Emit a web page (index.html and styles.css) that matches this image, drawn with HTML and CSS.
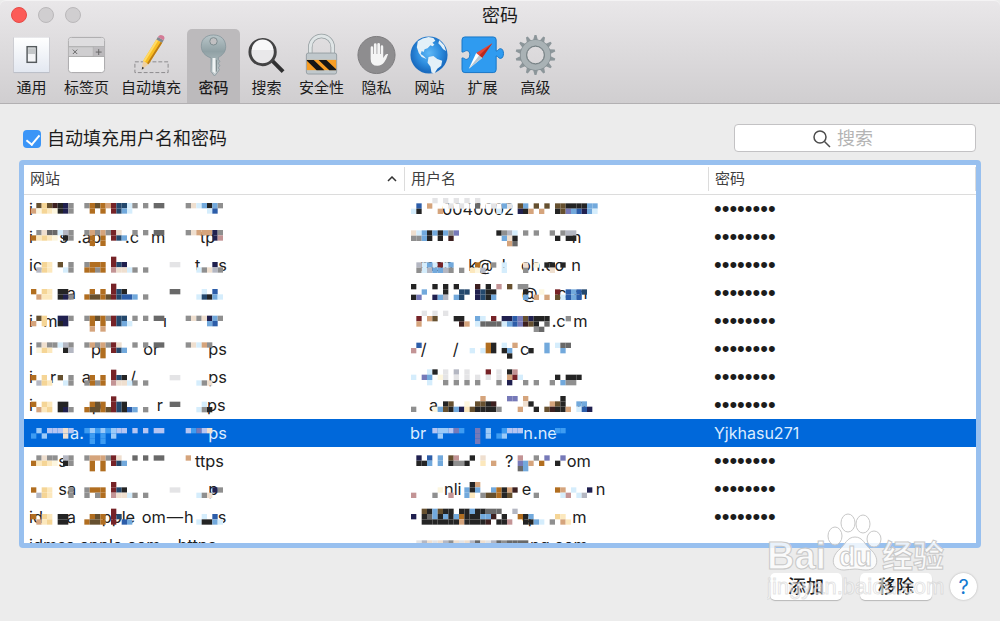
FILE: index.html
```html
<!DOCTYPE html>
<html lang="zh-CN">
<head>
  <meta charset="UTF-8" />
  <meta name="viewport" content="width=device-width, initial-scale=1.0" />
  <title>密码</title>
  <link rel="stylesheet" href="styles.css">
</head>
<body>
  <header>
    <div class="titlebar">
      <div class="lights">
        <button class="light close" aria-label="关闭"></button>
        <button class="light" aria-label="最小化"></button>
        <button class="light" aria-label="缩放"></button>
      </div>
      <h1>密码</h1>
    </div>
    <nav class="toolbar">
      <button class="tool">
        <svg viewBox="0 0 42 42"><defs><linearGradient id="pale" x2="0" y2="1"><stop stop-color="#fff"/><stop offset="1" stop-color="#e3e8f1"/></linearGradient></defs>
          <rect x="2.500" y="3" width="37" height="36.500" fill="#b9bcc5"/><rect x="3" y="3" width="36" height="35.500" fill="url(#pale)"/>
          <rect x="16.500" y="12.500" width="9.500" height="16" fill="#f4f5f7" stroke="#555a5d" stroke-width="1.500"/><rect x="17.500" y="14" width="7.500" height="6" fill="#c4c7c9"/></svg>
        <span>通用</span>
      </button>
      <button class="tool">
        <svg viewBox="0 0 42 42"><rect x="2.500" y="3" width="37" height="36" rx="3" fill="#fff" stroke="#a9a8aa"/>
          <path d="M3 22V6q0-2.500 2.500-2.500h31q2.500 0 2.500 2.500v16z" fill="#dedddf"/><path d="M3 12.500h36v10H3z" fill="#cfced0"/><path d="M3 12.500h36M3 22.500h36M28 12.500v10" stroke="#aaa" fill="none"/>
          <path d="M28 13h11v9H28z" fill="#bbb9bc"/><path d="M7 15.500l4.500 4.500m0-4.500L7 20M30.500 18h6m-3-3v6" stroke="#666" fill="none"/></svg>
        <span>标签页</span>
      </button>
      <button class="tool">
        <svg viewBox="0 0 42 42"><rect x="4" y="28" width="34" height="11" fill="none" stroke="#8b8a8c" stroke-dasharray="4 2"/>
          <path d="M11 36l1.500-9 5.500 3.500z" fill="#efd0a0"/><path d="M11 36l.5-3 2 1.200z" fill="#333"/><path d="M12.500 27L26 5l6 3.500L18 30.500z" fill="#f8bd22"/><path d="M12.500 27L26 5l2 1.200-13.800 22z" fill="#ffda65"/><path d="M16.500 29.500L30.500 7.500 32 8.500 18 30.500z" fill="#bb7b16"/>
          <path d="M26 5l1.500-2.500 6 3.500L32 8.500z" fill="#818990"/><path d="M27.500 2.500Q29.500-.5 32.500 1t1 5z" fill="#d37b96"/></svg>
        <span>自动填充</span>
      </button>
      <button class="tool active">
        <svg viewBox="0 0 42 42"><defs><linearGradient id="steel" x2="0" y2="1"><stop stop-color="#b9c6c9"/><stop offset=".4" stop-color="#90a1a5"/><stop offset="1" stop-color="#c8d0d2"/></linearGradient></defs>
          <path d="M21 .5c8 0 12.500 5 12.500 12 0 6-4 9-7.500 11v2l1.500 2-1.500 2 1.500 2.500-1.500 2 1 2-2 3-3 3.500-3.500-4.500V24c-6-2-10-6-10-12C8.500 5 13 .5 21 .5z" fill="url(#steel)" stroke="#84949a" stroke-width=".8"/>
          <path d="M20 24h3v16l-3-2z" fill="#f0f4f4"/><path d="M24 26v12" stroke="#7b888b"/><circle cx="21" cy="7" r="3.800" fill="#c1c0c2" stroke="#7c8b8e"/></svg>
        <span>密码</span>
      </button>
      <button class="tool">
        <svg viewBox="0 0 42 42"><path d="M27 27l11 11" stroke="#303031" stroke-width="4"/><circle cx="17" cy="18" r="13" fill="#e9e8ea" stroke="#434344" stroke-width="3"/><path d="M6 16a11 11 0 0 1 22 0z" fill="#f8f8f9"/></svg>
        <span>搜索</span>
      </button>
      <button class="tool">
        <svg viewBox="0 0 42 42"><path d="M9.500 21V13a11.500 11.500 0 0 1 23 0v8" fill="none" stroke="#929b9e" stroke-width="4.500"/><path d="M9.500 21V13a11.500 11.500 0 0 1 23 0v8" fill="none" stroke="#dfe5e6" stroke-width="3"/>
          <rect x="5.500" y="19" width="31" height="21.500" rx="2" fill="#c0c8cc" stroke="#969fa3"/><path d="M6 26h30v10.500H6z" fill="#f79d24"/><path d="M6 26h7l11 10.500h-8L6 27zM18 26h8l10 9.500v1h-7z" fill="#161616"/></svg>
        <span>安全性</span>
      </button>
      <button class="tool">
        <svg viewBox="0 0 42 42"><circle cx="21" cy="21" r="19" fill="#8e8d8f" stroke="#7c7b7d"/>
          <path d="M15 25V13.500q0-1.500 1.300-1.500t1.300 1.500V20h.7V10.500q0-1.500 1.400-1.500t1.400 1.500V20h.7v-9.700q0-1.500 1.400-1.500t1.400 1.500V20h.7v-7.500q0-1.500 1.300-1.500t1.300 1.500V24l2-3q1-1.500 3-1-1.500 5-4 8.500T22 32q-7 0-7-7z" fill="#f4f4f4"/></svg>
        <span>隐私</span>
      </button>
      <button class="tool">
        <svg viewBox="0 0 42 42"><defs><radialGradient id="sea" cy=".45"><stop stop-color="#5fb8f6"/><stop offset=".6" stop-color="#2f8fe0"/><stop offset="1" stop-color="#1a6cc0"/></radialGradient></defs><circle cx="20.500" cy="21" r="19" fill="url(#sea)"/>
          <path d="M9 7l5-3 6-1.500 5 1 2 3-3 2 2 2-2 1.500-2-1-3 3-3 1-1 3-2-1-1 3 3 2 3 3-5-2-3-4-2-6zM31 6l5 5 2 6-3-2-3-4-2-2zM20 23l5-1 4 3 5 2-1 5-4 3-3 5-3-1-1-6-3-4z" fill="#e3f0f8"/></svg>
        <span>网站</span>
      </button>
      <button class="tool">
        <svg viewBox="0 0 42 42"><path d="M3 2.500h29q3 0 3 3V17c2 0 2-2.500 4.500-2.500 4 0 4 10 0 10-2.500 0-2.500-2.500-4.500-2.500v14q0 3-3 3H3q-3 0-3-3V24c3 0 3 2 5 1.500 4-1 4-9 0-9-2 0-2 1.500-5 1.500V5.500q0-3 3-3z" fill="#2f9bf0" stroke="#1775c6"/>
          <path d="M31 9L14.500 19l6 5z" fill="#e94635"/><path d="M31 9L20.500 24l-3-2.500z" fill="#b9281f"/><path d="M7 35l7.500-16 6 5z" fill="#fff"/><path d="M7 35l10.500-13.500 3 2.500z" fill="#b9c7d2"/></svg>
        <span>扩展</span>
      </button>
      <button class="tool">
        <svg viewBox="0 0 42 42" id="gear"><circle cx="21" cy="21" r="12.500" fill="none" stroke="#858f93" stroke-width="7"/><circle cx="21" cy="21" r="12.500" fill="none" stroke="#a9b2b5" stroke-width="5.500"/><circle cx="21" cy="21" r="9" fill="none" stroke="#737e82"/></svg>
        <span>高级</span>
      </button>
    </nav>
  </header>

  <main>
    <div class="options">
      <label class="autofill"><input type="checkbox" checked />自动填充用户名和密码</label>
      <div class="search">
        <svg viewBox="0 0 18 18"><circle cx="7" cy="7" r="6" fill="none" stroke="#4c4c4c" stroke-width="1.500"/><path d="M11.500 11.500l5.500 5.500" stroke="#4c4c4c" stroke-width="1.500"/></svg>
        <input type="search" placeholder="搜索" aria-label="搜索" />
      </div>
    </div>

    <div class="list">
      <table>
        <colgroup><col class="site"><col class="user"><col></colgroup>
        <thead>
          <tr>
            <th><span>网站<svg class="sort" viewBox="0 0 10 6"><path d="M1 5l4-4 4 4" fill="none" stroke="#333" stroke-width="1.500"/></svg></span></th>
            <th><span>用户名</span></th>
            <th><span>密码</span></th>
          </tr>
        </thead>
        <tbody id="rows"></tbody>
      </table>
    </div>

    <footer>
      <button class="push">添加</button>
      <button class="push">移除</button>
      <button class="help" aria-label="帮助">?</button>
    </footer>
  </main>

  <svg class="watermark" viewBox="0 0 180 88">
    <g class="logo">
      <ellipse cx="68" cy="23" rx="7" ry="9"/><ellipse cx="81" cy="10" rx="7" ry="9"/><ellipse cx="96" cy="11" rx="7" ry="9"/><ellipse cx="107" cy="26" rx="7" ry="8"/>
      <path d="M88 24c8 0 10 8 15 12 10 8 9 21-4 21-5 0-7-1-11-1s-7 1-11 1c-13 0-14-13-4-21 5-4 7-12 15-12z"/>
      <text x="0" y="56" class="bai">Bai</text><text x="72" y="53" class="du">du</text><text x="115" y="54" class="jy">经验</text>
    </g>
    <text x="0" y="81" class="url">jingyan.baidu.com</text>
  </svg>

  <script src="rows.js"></script>
</body>
</html>
```
FILE: styles.css
```css
* {
  box-sizing: border-box;
}
body {
  margin: 0;
  height: 100vh;
  display: flex;
  flex-direction: column;
  background: #ececec;
  color: #1c1c1c;
  font-family: Inter, "Noto Sans CJK SC", sans-serif;
}
button, input {
  font-family: inherit;
  color: inherit;
}
button {
  border: 0;
  padding: 0;
  background: none;
}
header {
  background: linear-gradient(#e9e7e9, #d0ced0);
  border-bottom: 1px solid #b2b0b2;
  border-top: 1px solid #f4f3f4;
  border-radius: 6px 6px 0 0;
}
.titlebar {
  position: relative;
  height: 28px;
}
h1 {
  margin: 0;
  font-size: 18px;
  font-weight: 400;
  line-height: 30px;
  text-align: center;
}
.lights {
  position: absolute;
  left: 11px;
  top: 6px;
  display: flex;
  gap: 11px;
}
.light {
  width: 16px;
  height: 16px;
  border-radius: 50%;
  border: 1px solid #bab8ba;
  background: #d0ced0;
}
.close {
  background: #fc5b57;
  border-color: #e64b47;
}
.toolbar {
  display: flex;
  padding-left: 5px;
}
.tool {
  display: flex;
  flex-direction: column;
  align-items: center;
  min-width: 53px;
  height: 74px;
  padding: 5px 6px 0;
  font-size: 15px;
  line-height: 24px;
  white-space: nowrap;
}
.tool svg {
  width: 41px;
  height: 42px;
  overflow: visible;
}
.active {
  background: #bcbabc;
  border-radius: 5px 5px 0 0;
}
.active span {
  font-weight: 500;
}

main {
  flex: 1;
  min-height: 0;
  display: flex;
  flex-direction: column;
  padding: 20px 19px 21px;
}
.options {
  display: flex;
  justify-content: space-between;
  padding: 0 5px 0 4px;
  margin-bottom: 6px;
}
.autofill {
  display: flex;
  align-items: center;
  gap: 6px;
  font-size: 18px;
  line-height: 30px;
}
.autofill input {
  appearance: none;
  position: relative;
  width: 18px;
  height: 18px;
  margin: 0;
  border-radius: 4px;
  background: #3b95f7;
}
.autofill input:checked::after {
  content: "";
  position: absolute;
  left: 6px;
  top: 2px;
  width: 6px;
  height: 11px;
  border: solid #fff;
  border-width: 0 2px 2px 0;
  transform: rotate(40deg);
}
.search {
  position: relative;
}
.search svg {
  position: absolute;
  left: 79px;
  top: 6px;
  width: 18px;
}
.search input {
  display: block;
  width: 242px;
  height: 28px;
  padding: 0 8px 0 102px;
  border: 1px solid #c3c2c4;
  border-radius: 4px;
  background: #fff;
  font-size: 18px;
}
.search input::placeholder {
  color: #b4b4b4;
}

.list {
  flex: 1;
  min-height: 0;
  overflow: hidden;
  border: 5px solid #98c0ef;
  border-radius: 4px;
  background: #fff;
}
table {
  width: 100%;
  table-layout: fixed;
  border-collapse: collapse;
}
.site {
  width: 381px;
}
.user {
  width: 304px;
}
th {
  height: 29px;
  padding: 2px 0;
  border-bottom: 1px solid #dcdcdc;
  font-size: 15px;
  font-weight: 400;
  line-height: 24px;
  text-align: left;
  color: #404040;
}
th span {
  display: flex;
  align-items: center;
  justify-content: space-between;
  padding: 0 7px 0 6px;
  border-right: 1px solid #dcdcdc;
}
.sort {
  width: 10px;
}
td {
  height: 28px;
  padding: 0 0 0 5px;
  font-size: 16px;
  line-height: 28px;
}
td svg {
  display: block;
  width: 200px;
  height: 28px;
  overflow: visible;
}
td text {
  font-size: 49px;
  fill: #202020;
}
.dots {
  font-family: "Liberation Sans", sans-serif;
  font-size: 22px;
}
.selected {
  background: #0068da;
  color: #dcecff;
}
.selected text {
  fill: #dcecff;
}

footer {
  display: flex;
  justify-content: flex-end;
  align-items: center;
  gap: 18px;
  padding: 25px 4px 0 0;
}
.push {
  width: 72px;
  height: 27px;
  border-radius: 5px;
  background: #fff;
  box-shadow: 0 1px 1px #b8b8b8;
  font-size: 18px;
  font-weight: 500;
  line-height: 26px;
}
.help {
  width: 27px;
  height: 27px;
  border-radius: 50%;
  background: #fff;
  box-shadow: 0 0 2px #aaa;
  color: #1479d0;
  font-size: 20px;
}
.watermark {
  position: absolute;
  right: 53px;
  bottom: 20px;
  width: 180px;
  height: 88px;
  pointer-events: none;
}
.logo {
  fill: #fff;
  fill-opacity: .8;
  stroke: #c8c8c8;
}
.bai {
  font: bold 38px "Liberation Sans", sans-serif;
}
.du {
  font: bold 27px "Liberation Sans", sans-serif;
}
.jy {
  font: bold 31px "Noto Sans CJK SC", sans-serif;
}
.url {
  font: 22px "Liberation Sans", sans-serif;
  fill: #fff;
  fill-opacity: .6;
  stroke: #bbb;
  stroke-opacity: .4;
}
```
FILE: rows.js
```js
// one letter per mosaic block
const colors = {
  k: '#242424', n: '#20204f', g: '#696969', G: '#8f8f8f', s: '#b4b7c2', l: '#e4e4e6',
  o: '#b16e20', b: '#66502f', d: '#3d2020', m: '#762327', p: '#d5a47c', y: '#fce8bd',
  Y: '#f5d596', w: '#fdf6df', e: '#efdfcf', r: '#c39495', B: '#24486d', u: '#2c5da9',
  c: '#72a9dc', t: '#d5edfc', v: '#7679b8', W: '#ffffff', q: '#9bcaf8', Q: '#b5c5f2', x: '#3d9cf2'
};

// [top, mosaic lines, [x, text] pairs], in thirds of a pixel
const sites = [
  [24, ['.bYbdknG..GobopmBBtG.G.gg....GetckcG', 'pwYywknG...o.o.mBct..............tu.'], [[0, 'i']]],
  [21, ['.GeggtsG..GpGpGme..G.G.gg....GepppnG', 'oyYyw.kG...o.o.mBc................nr', '...........o.o'], [[0, 'i'], [91, 's'], [145, '.ap'], [288, '.c'], [366, 'm'], [513, 'tp']]],
  [17, ['...............m', '..Yy.b.G..Gooo.mBn........ll......n', '.sYy..tG..ooGo.reetG.G.........tGesG'], [[0, 'ic'], [498, 't'], [568, 's']]],
  [14, ['...............m', 'o.Yy.kk....o.o.mBk........gg....t.u', '.pyy.knG..obbobmBuuc.G.........tBkct'], [[113, 'a']]],
  [26, ['.bY..nnG..GoboGmBB.G.G.gg....GeGencG', 'p.Y..kn....o.o.mBct..............cu', '...........p.p'], [[0, 'i'], [43, 'm'], [402, 'ı']]],
  [22, ['.GeGGtsG..GpGpGme..G.G.gg....GetpG', '.wYy..ks.....o.mBc', '.............o'], [[0, 'i'], [186, 'p'], [343, 'or'], [538, 'ps']]],
  [20, ['...............m', 'o.Y..b.G...o.o.mBk........ll', '.sYy..tG..GoGo.reetG.G.........tGe'], [[0, 'i'], [63, 'r'], [158, 'a'], [303, '/'], [538, 'ps']]],
  [16, ['...............m', 'o.Yy.kk....obo.mBk........gg....t', '.pyY.knG..obbobmBkuc.G.........tGk'], [[0, 'i'], [188, 'p'], [383, 'r'], [534, 'ps']]],
  [27, ['.q.QQQeQ..xqxqxqQQ.Q.Q.QQ....QxvQe', 'x.q...e....x.x.q', '...........x.x'], [[123, 'a.'], [538, 'ps']]],
  [25, ['.GeGG.sG..GpppGme..g.g.gg....p', 'oyYyw.kG...o.o.mBc', '...........o.o'], [[88, 's'], [498, 'ttps']]],
  [21, ['...............m', 'o.Yy...G..Gooo.mBk........ll......nG', '.sYy...G..G.Go.reetG.G.........tGe'], [[88, 'sa'], [538, 'p']]],
  [17, ['...............m', 'o.Yy.kk....obo.mB...............t.u', '.pyY.kk...obbo.m.uc............tkkct'], [[0, 'id'], [113, 'a'], [218, 'pple'], [338, 'om'], [413, '—'], [465, 'h'], [566, 's']]],
  [0, [], [[0, 'idmsa.apple.com – https']]]
];
const users = [
  [9, ['....l.l.l.l.l', '.u.p..WlWlWWgWWlWclWbc.b.b.bbkkkkcc', 'tk...p..........t...nkp.p..kbvcunct'], [[96, '0040002']]],
  [22, ['etckckcGv.......kGst.G.G..G.Gss', 'GGck.k.d.........cek.......k.kk', '..................pg'], [[485, 'n']]],
  [34, ['.stctmtc....o..G.t...e.w.kk.k', '.GtsccsG.G.yws...t...G....e'], [[30, 'man'], [175, 'k@'], [275, 'l'], [333, 'oh.co'], [484, 'n']]],
  [15, ['k...k.k.k...d.k.r.b.GG', '..c...k..BB.nBkk.....k..w..m.ucuB', 'kv..ncs.cB..nBkc.....c.p.p.btucu'], [[335, '@'], [442, 'c'], [490, 'm']]],
  [11, ['..l.l.l', '.m.pb...kk..ct.m.nnuvbnkkk...G', '.p.......dp.tggggtcuvdbk.g', '.......................Gg'], [[425, '.c'], [490, 'm']]],
  [23, ['.u............ok.t.p.....c.tgg', 'r..........t.tok.kc...k..c..c', '..................k'], [[32, '/'], [128, '/'], [330, 'c']]],
  [19, ['...tk.l.s.l...m.l.kr', 't.vc.wl.l.l.l.l.l.pmt......k.kkk', '...t..G.G.G.G...G.n..G.G..G.cGG'], []],
  [15, ['.............p....vv.p......k', '......kb..w.bbkd.....ek...pbk..cc', 'G...wcbkcnybkkkkG...p..k.bdkkp.tun'], [[57, 'a'], [500, 'n']]],
  [27, ['....QqqQvx..v.q..xQQQ......xx', '.....q......v.q.xq', '............v'], [[0, 'br'], [340, 'n.ne']]],
  [25, ['.n.u.c.br..k.e......r..G.v..v', '.kkc.c.kGGk..y.p....vcp.o..k', '....................gc'], [[285, '?'], [470, 'om']]],
  [21, ['...........kp', '.....w....ckc..cokpd.......op.t..n', 'r...G..r..cy.Gbbokb....G....tr.ts'], [[102, 'nli'], [335, 'e'], [557, 'n']]],
  [17, ['..bkcbkk.kkckkggg..s', 'n.kgckckcokkkccd.k..okc....Yy', '..kkkkkkkpkkkkd.kkr..kkct.G.py'], [[335, 'q'], [487, 'm']]],
  [28, ['.lselesGelesgelsgGgggg'], [[360, 'ng.com']]]
];

function mosaic([top, lines, words], left) {
  let out = words.map(([x, word]) => `<text x="${x}" y="59">${word}</text>`).join('');
  lines.forEach((line, r) => {
    [...line].forEach((ch, c) => {
      if (colors[ch]) {
        out += `<rect x="${left + c * 16}" y="${top + r * 16}" width="16" height="16" fill="${colors[ch]}"/>`;
      }
    });
  });
  return `<svg viewBox="0 0 600 84">${out}</svg>`;
}

document.getElementById('rows').innerHTML = sites.map((site, i) => {
  const password = i === 8 ? '<td>Yjkhasu271</td>' : i === 12 ? '<td></td>' : '<td class="dots">••••••••</td>';
  return `<tr class="${i === 8 ? 'selected' : ''}"><td>${mosaic(site, 6)}</td><td>${mosaic(users[i], 3)}</td>${password}</tr>`;
}).join('');

// teeth of the gear icon
let teeth = '';
for (let i = 0; i < 14; i++) {
  teeth += `<path d="M18.500 6L20 .5h2L23.500 6z" fill="#8c969a" transform="rotate(${i * 360 / 14} 21 21)"/>`;
}
document.getElementById('gear').insertAdjacentHTML('afterbegin', teeth);
```
